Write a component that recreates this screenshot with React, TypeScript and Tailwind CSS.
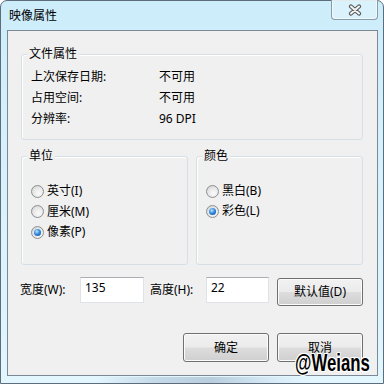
const font = "font-['Noto_Sans','Noto_Sans_CJK_SC',sans-serif]"

function Group({ title, className, children }: { title: string; className: string; children: React.ReactNode }) {
  return (
    <div className={`relative rounded-[3px] border border-[#d5dfe5] shadow-[inset_1px_1px_0_#ffffff] ${className}`}>
      <span className="absolute -top-[9px] left-[5px] bg-[#f0f0f0] px-[2px] leading-[16px]">{title}</span>
      {children}
    </div>
  )
}

function Radio({ label, checked }: { label: string; checked?: boolean }) {
  return (
    <div className="flex h-[16px] items-center gap-[3px]">
      <span className="flex h-[13px] w-[13px] items-center justify-center rounded-full border border-[#8e8f8f] bg-[radial-gradient(circle_at_60%_65%,#fbfbfb_0%,#e6e6e6_55%,#c9c9c9_100%)]">
        {checked && (
          <span className="h-[7px] w-[7px] rounded-full bg-[radial-gradient(circle_at_40%_35%,#b6e4ff_0%,#2d84dc_50%,#0b4790_100%)]" />
        )}
      </span>
      <span className="leading-[16px]">{label}</span>
    </div>
  )
}

function Button({ label, className }: { label: string; className: string }) {
  return (
    <div
      className={`flex items-center justify-center rounded-[3px] border border-[#707070] bg-[linear-gradient(180deg,#f2f2f2_0%,#ebebeb_48%,#dddddd_52%,#cfcfcf_100%)] shadow-[inset_0_0_0_1px_#fbfbfb] leading-[16px] ${className}`}
    >
      {label}
    </div>
  )
}

function Field({ value, className }: { value: string; className: string }) {
  return (
    <div className={`h-[26px] border border-[#dfe3e8] border-t-[#abadb3] bg-white pl-[4px] pt-[2px] leading-[16px] ${className}`}>
      {value}
    </div>
  )
}

export default function App() {
  return (
    <div className={`relative h-[384px] w-[384px] overflow-hidden bg-white text-[12px] text-black ${font}`}>
      <div className="flex h-[384px] w-[384px] flex-col rounded-t-[7px] border border-[#5d6d7b] bg-[linear-gradient(180deg,#cdedfb_0%,#d8f2fc_50%,#e2f6fe_100%)]">
        {/* title bar */}
        <div className="flex h-[29px] items-start justify-between">
          <span className="pl-[8px] pt-[7px] leading-[16px]">映像属性</span>
          <div className="-mt-px mr-[5px] flex h-[20px] w-[47px] items-center justify-center rounded-b-[4px] border border-t-0 border-[#8b9aa7] bg-[#def3fc]/70 shadow-[inset_0_0_0_1px_rgba(255,255,255,0.6)]">
            <svg width="14" height="12" viewBox="0 0 14 12">
              <path d="M3 2.5 L11 9.5 M11 2.5 L3 9.5" stroke="#5b5b5b" strokeWidth="4.2" strokeLinecap="round" />
              <path d="M3 2.5 L11 9.5 M11 2.5 L3 9.5" stroke="#f4f4f4" strokeWidth="2" strokeLinecap="round" />
            </svg>
          </div>
        </div>

        {/* client area */}
        <div className="ml-[6px] flex h-[346px] w-[371px] flex-col border border-[#7c8893] bg-[#f0f0f0]">
          <Group title="文件属性" className="ml-[13px] mt-[23px] h-[86px] w-[342px]">
            <div className="flex flex-col gap-[5px] pl-[9px] pt-[14px] leading-[16px]">
              <div className="flex">
                <span className="w-[128px]">上次保存日期:</span>
                <span>不可用</span>
              </div>
              <div className="flex">
                <span className="w-[128px]">占用空间:</span>
                <span>不可用</span>
              </div>
              <div className="flex">
                <span className="w-[128px]">分辨率:</span>
                <span>96 DPI</span>
              </div>
            </div>
          </Group>

          <div className="ml-[13px] mt-[16px] flex gap-[8px]">
            <Group title="单位" className="h-[109px] w-[167px]">
              <div className="flex flex-col gap-[4.5px] pl-[9px] pt-[26px]">
                <Radio label="英寸(I)" />
                <Radio label="厘米(M)" />
                <Radio label="像素(P)" checked />
              </div>
            </Group>
            <Group title="颜色" className="h-[109px] w-[167px]">
              <div className="flex flex-col gap-[4px] pl-[9px] pt-[26px]">
                <Radio label="黑白(B)" />
                <Radio label="彩色(L)" checked />
              </div>
            </Group>
          </div>

          <div className="ml-[12px] mt-[12px] flex h-[29px] items-start">
            <span className="mt-[5px] w-[60px] leading-[16px]">宽度(W):</span>
            <Field value="135" className="w-[64px]" />
            <span className="ml-[6px] mt-[5px] w-[56px] leading-[16px]">高度(H):</span>
            <Field value="22" className="w-[63px]" />
            <Button label="默认值(D)" className="ml-[8px] mt-[1px] h-[28px] w-[86px]" />
          </div>

          <div className="ml-[175px] mt-[27px] flex gap-[8px]">
            <Button label="确定" className="h-[29px] w-[86px]" />
            <Button label="取消" className="h-[29px] w-[86px]" />
          </div>
        </div>

        <div className="mt-px h-[6px] bg-[linear-gradient(90deg,transparent_0%,transparent_25%,#b9cfdf_40%,#a6bdd0_55%,#cfe4f0_70%,transparent_80%)] opacity-70" />
      </div>

      {/* watermark over the dialog corner */}
      <div className="absolute left-[295px] top-[351px] origin-left scale-x-[0.7] font-['Liberation_Sans',sans-serif] text-[24px] font-bold leading-none text-black [text-shadow:1px_0_#fff,-1px_0_#fff,0_1px_#fff,0_-1px_#fff,1px_1px_#fff,-1px_-1px_#fff,1px_-1px_#fff,-1px_1px_#fff]">
        @Weians
      </div>
    </div>
  )
}
